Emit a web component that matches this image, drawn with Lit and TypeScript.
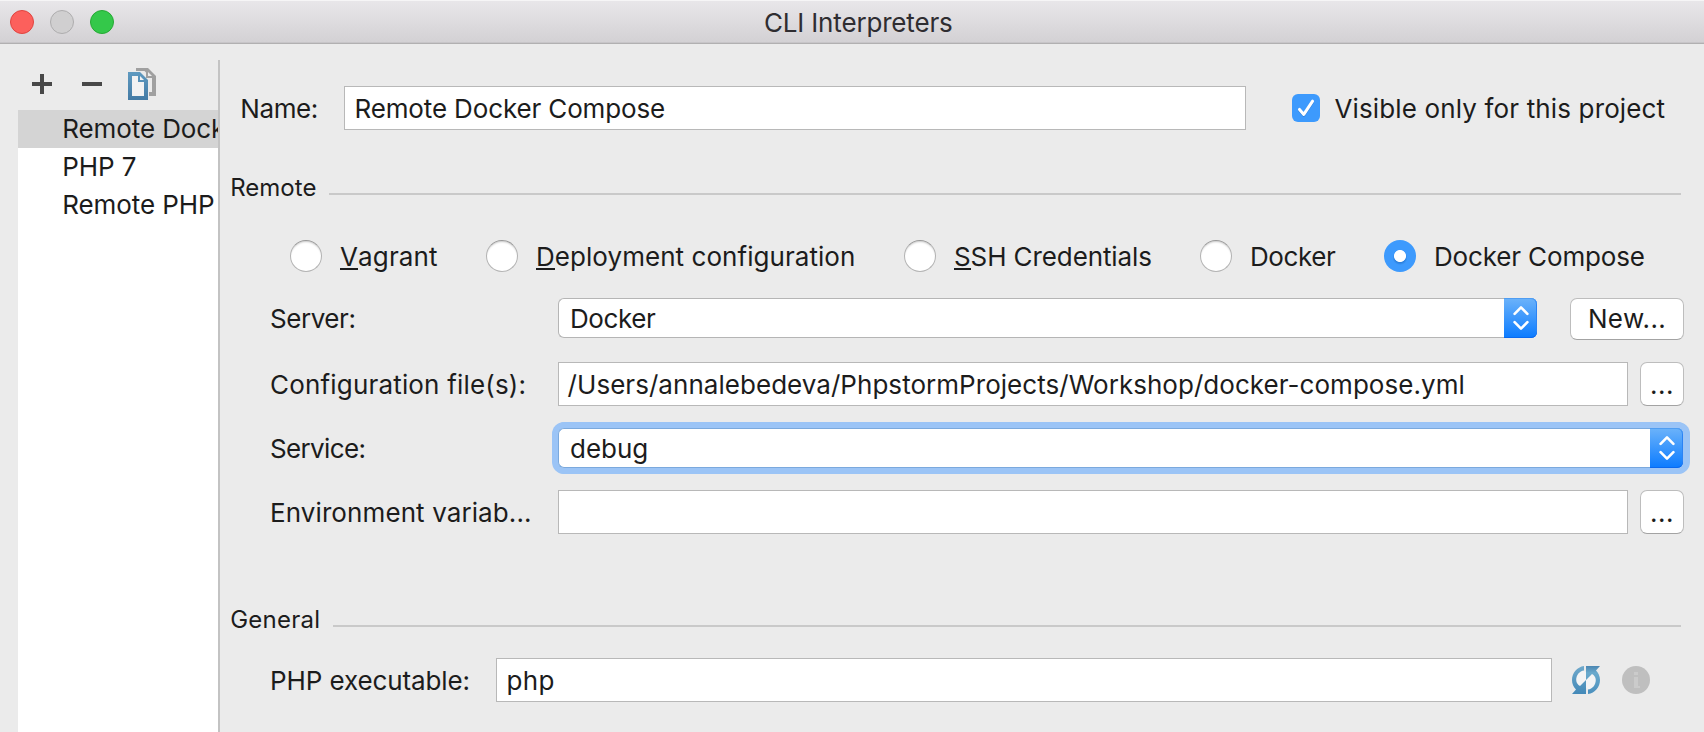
import { LitElement, html, css, nothing } from "lit";

const INTERPRETERS = ["Remote Dock", "PHP 7", "Remote PHP"];

const REMOTE_TYPES = [
  { key: "vagrant", mnemonic: "V", rest: "agrant" },
  { key: "deployment", mnemonic: "D", rest: "eployment configuration" },
  { key: "ssh", mnemonic: "S", rest: "SH Credentials" },
  { key: "docker", mnemonic: "", rest: "Docker" },
  { key: "compose", mnemonic: "", rest: "Docker Compose" },
];

class MacSelect extends LitElement {
  static properties = { value: {}, focused: { type: Boolean, reflect: true } };
  declare value: string;
  static styles = css`
    :host { display: flex; box-sizing: border-box; height: 40px; border-radius: 7px; }
    :host([focused]) { box-shadow: 0 0 0 6px #9bc4f6, 1px 0 0 6px #9bc4f6; border-radius: 6px; }
    .value {
      flex: 1; box-sizing: border-box; padding-left: 11px; line-height: 39px;
      background: #fff; border: 1px solid #b5b5b5; border-right: 0;
      border-radius: 6px 0 0 6px; white-space: nowrap;
    }
    :host([focused]) .value { border-color: #7ba9dd; letter-spacing: 0; }
    .docker { letter-spacing: -0.41px; }
    .knob {
      display: flex; align-items: center; justify-content: center;
      width: 33px; height: 40px; box-sizing: border-box; border-radius: 0 6px 6px 0;
      background: linear-gradient(#6cb3fa, #0b7bff);
      box-shadow: inset 0 1px 0 #4f9df2, inset 0 -1px 0 #0a69ef, inset -1px 0 0 #2b83f4;
    }
  `;
  render() {
    return html`<div class="value ${this.value === "Docker" ? "docker" : ""}">${this.value}</div>
      <div class="knob">
        <svg width="16" height="26" viewBox="0 0 16 26" fill="none" stroke="#fff"
          stroke-width="2.6" stroke-linecap="round" stroke-linejoin="round">
          <path d="M1.600 8.800 8 2.400l6.400 6.400M1.600 17.200 8 23.600l6.400-6.400"></path>
        </svg>
      </div>`;
  }
}
customElements.define("mac-select", MacSelect);

class AppRoot extends LitElement {
  static styles = css`
    :host {
      display: flex; flex-direction: column; width: 1704px; height: 732px; overflow: hidden;
      background: #ebebeb; color: #1c1c1c; font: 26px/31px Inter, "Liberation Sans", sans-serif;
      white-space: nowrap;
    }
    .titlebar {
      display: flex; align-items: center; flex: none; height: 44px; box-sizing: border-box;
      padding: 0 10px; gap: 16px; color: #2f2d31;
      background: linear-gradient(#e9e7ea, #d2d0d3);
      box-shadow: inset 0 1px 0 #f6f5f6, inset 0 -1px 0 #b1b0b1, inset 0 -2px 0 #c7c5c8;
    }
    .light { width: 24px; height: 24px; box-sizing: border-box; border-radius: 50%; border: 1px solid; }
    .red { background: #fc605c; border-color: #e0443f; }
    .grey { background: #d0cfd0; border-color: #aeadae; }
    .green { background: #34c84a; border-color: #26a934; }
    .title { margin-left: 634px; padding-top: 1px; letter-spacing: -0.17px; }
    .content { display: flex; flex: 1; min-height: 0; padding-top: 16px; }

    .sidebar { display: flex; flex-direction: column; width: 200px; margin-left: 18px; border-right: 2px solid #c3c3c3; }
    .tools { display: flex; gap: 26px; height: 50px; box-sizing: border-box; padding: 8px 0 0 14px; }
    .tools svg { display: block; }
    .sign { margin-top: 6px; }
    .tools .minus { margin: 6px 0 0 4px; }
    .list { flex: 1; overflow: hidden; background: #fff; }
    .item { height: 38px; line-height: 37px; padding-left: 44.300px; letter-spacing: -0.1px; overflow: hidden; }
    .selected { background: #d4d4d4; }

    .form { flex: 1; display: flex; flex-direction: column; }
    .field {
      box-sizing: border-box; height: 44px; line-height: 43px; padding-left: 9.500px;
      border: 1px solid #b8b8b8; background: #fff;
    }
    .namerow { display: flex; align-items: center; height: 44px; margin: 26px 0 0 20.300px; }
    .namerow .label { width: 103.700px; padding-top: 1px; letter-spacing: -0.4px; }
    .namerow .field { width: 902px; letter-spacing: -0.14px; }
    .checkbox { display: block; margin: 0 14.500px 0 46px; }
    .visible { padding-top: 1px; letter-spacing: 0.14px; }

    .section { display: flex; align-items: center; height: 30px; margin-left: 10.200px; font-size: 24px; line-height: 30px; letter-spacing: 0.02px; }
    .heading { padding-top: 2px; }
    .remote { margin-top: 42px; }
    .general { margin-top: 70px; letter-spacing: 0.25px; }
    .rule { flex: 1; height: 2px; margin: 14px 23px 0 12.500px; background: #c9c9c9; }

    .radios { display: grid; grid-template-columns: 196px 418px 296px 184px 1fr; height: 32px; margin: 38px 0 0 70px; }
    .radio { display: flex; align-items: center; gap: 18px; }
    .dot {
      width: 32px; height: 32px; box-sizing: border-box; border-radius: 50%; background: #fff;
      border: 1px solid #b4b4b4; border-top-color: #989898; box-shadow: inset 0 2px 2px -1px #c9c9c9;
    }
    .on {
      background: radial-gradient(circle at 50% 50%, #fff 5.600px, transparent 6.400px),
        radial-gradient(circle at 50% 55%, #2b7fdb 5px, #3d9afd 7.500px);
      background-origin: border-box; border-color: transparent; box-shadow: none;
    }
    .caption { padding-top: 1px; }
    .mn { display: inline-block; height: 29px; line-height: 31px; box-sizing: border-box; border-bottom: 2px solid #1c1c1c; vertical-align: top; }
    .vagrant { letter-spacing: 0.13px; }
    .deployment { letter-spacing: 0.05px; }
    .ssh { letter-spacing: -0.1px; }
    .docker { letter-spacing: -0.41px; }
    .compose { letter-spacing: -0.15px; }

    .row { display: flex; height: 44px; line-height: 45px; margin-left: 50px; }
    .row .label { width: 288px; }
    .server { margin-top: 24px; }
    .config { margin-top: 22px; }
    .service { margin-top: 20px; }
    .env { margin-top: 20px; }
    .exec { margin-top: 24px; }
    .server .label { letter-spacing: -0.45px; }
    .config .label { letter-spacing: 0.18px; }
    .service .label { letter-spacing: -0.65px; }
    .env .label { letter-spacing: 0.1px; }
    .exec .label { width: 226px; letter-spacing: -0.1px; }
    .row .field { width: 1070px; }
    .config .field { padding-left: 8.600px; letter-spacing: 0.04px; }
    .exec .field { width: 1056px; letter-spacing: 0.4px; }
    .server mac-select { width: 979px; margin-top: 2px; }
    .service mac-select { width: 1125px; margin-top: 2px; }
    .button {
      box-sizing: border-box; border: 1px solid #bdbdbd; border-bottom-color: #a3a3a3; border-radius: 7px;
      background: #fff; text-align: center;
    }
    .new { width: 114px; height: 42px; margin: 2px 0 0 33px; line-height: 39px; letter-spacing: 0.34px; }
    .browse { width: 44px; height: 44px; margin-left: 12px; line-height: 43px; letter-spacing: 0.5px; }
    .refresh { display: block; margin: 8px 0 0 20px; }
    .info { display: block; margin: 8px 0 0 22px; }
  `;

  private checkbox() {
    return html`<svg class="checkbox" width="28" height="28" viewBox="0 0 28 28">
      <rect width="28" height="28" rx="6" fill="#3d9afd"></rect>
      <path d="M7.500 16.200l4.300 5L20.600 8" fill="none" stroke="#2a7dd8" stroke-width="3" stroke-linecap="round" stroke-linejoin="round"></path>
      <path d="M7.500 15.400l4.300 5L20.600 7.200" fill="none" stroke="#fff" stroke-width="3" stroke-linecap="round" stroke-linejoin="round"></path>
    </svg>`;
  }

  private copyIcon() {
    return html`<svg width="28" height="32" viewBox="0 0 28 32">
      <defs><linearGradient id="page" x1="0" y1="0" x2="0" y2="1">
        <stop offset="0" stop-color="#5f9ac0"></stop><stop offset="1" stop-color="#447ba5"></stop>
      </linearGradient></defs>
      <path d="M8 0h12l8 8v20h-7v-4h3V10h-6V4.500L16.500 3H8z" fill="#a0a0a0"></path>
      <path d="M20 4l4 4h-4z" fill="#ededed"></path>
      <path d="M0 4h12l8 8v20H0z" fill="url(#page)"></path>
      <path d="M4 8h6v6h6v14H4z" fill="#f2f2f2"></path>
      <path d="M12 8l4 4h-4z" fill="#f2f2f2"></path>
    </svg>`;
  }

  private refreshIcon() {
    const half = "M12 0C5 1 0 7 0 14c0 3.800 1.500 7 4 9.500L0 28h14V14l-6 6c-2.200-1.200-3.800-3.200-3.800-6C4.200 9 7.500 5 12 4.500z";
    return html`<svg class="refresh" width="28" height="28" viewBox="0 0 28 28">
      <defs><linearGradient id="up" x1="0" y1="0" x2="0" y2="1">
        <stop offset="0" stop-color="#6fa9cb"></stop><stop offset="1" stop-color="#4389b8"></stop>
      </linearGradient><linearGradient id="down" x1="0" y1="1" x2="0" y2="0">
        <stop offset="0" stop-color="#4b86b2"></stop><stop offset=".25" stop-color="#6aaacd"></stop><stop offset="1" stop-color="#4a8fbd"></stop>
      </linearGradient></defs>
      <path d="M4.200 14C4.200 9 7.500 5 12 4.500L16 8 20 8c2.200 1.200 3.800 3.200 3.800 6 0 5-3.300 9-7.800 9.500L12 20H8c-2.200-1.200-3.800-3.200-3.800-6z" fill="#f3f4f5"></path>
      <path d=${half} fill="url(#up)"></path>
      <path d=${half} fill="url(#down)" transform="rotate(180 14 14)"></path>
    </svg>`;
  }

  private infoIcon() {
    return html`<svg class="info" width="28" height="28" viewBox="0 0 28 28">
      <circle cx="14" cy="14" r="14" fill="#bfbfbf"></circle>
      <path d="M12 6h4v3h-4zM12 11h4v9h2v2h-6z" fill="#cbcbcb"></path>
    </svg>`;
  }

  render() {
    return html`
      <div class="titlebar">
        <div class="light red"></div><div class="light grey"></div><div class="light green"></div>
        <div class="title">CLI Interpreters</div>
      </div>
      <div class="content">
        <div class="sidebar">
          <div class="tools">
            <svg class="sign" width="20" height="20"><path d="M8 0h4v8h8v4h-8v8H8v-8H0V8h8z" fill="#484848"></path></svg>
            <svg class="minus" width="20" height="20"><path d="M0 8h20v4H0z" fill="#484848"></path></svg>
            ${this.copyIcon()}
          </div>
          <div class="list">
            ${INTERPRETERS.map((name, i) => html`<div class="item ${i === 0 ? "selected" : ""}">${name}</div>`)}
          </div>
        </div>
        <div class="form">
          <div class="namerow">
            <div class="label">Name:</div>
            <div class="field">Remote Docker Compose</div>
            ${this.checkbox()}
            <div class="visible">Visible only for this project</div>
          </div>
          <div class="section remote"><div class="heading">Remote</div><div class="rule"></div></div>
          <div class="radios">
            ${REMOTE_TYPES.map((r) => html`<div class="radio">
              <div class="dot ${r.key === "compose" ? "on" : ""}"></div>
              <div class="caption ${r.key}">${r.mnemonic ? html`<span class="mn">${r.mnemonic}</span>` : nothing}${r.rest}</div>
            </div>`)}
          </div>
          <div class="row server">
            <div class="label">Server:</div>
            <mac-select .value=${"Docker"}></mac-select>
            <div class="button new">New...</div>
          </div>
          <div class="row config">
            <div class="label">Configuration file(s):</div>
            <div class="field">/Users/annalebedeva/PhpstormProjects/Workshop/docker-compose.yml</div>
            <div class="button browse">...</div>
          </div>
          <div class="row service">
            <div class="label">Service:</div>
            <mac-select .value=${"debug"} focused></mac-select>
          </div>
          <div class="row env">
            <div class="label">Environment variab...</div>
            <div class="field"></div>
            <div class="button browse">...</div>
          </div>
          <div class="section general"><div class="heading">General</div><div class="rule"></div></div>
          <div class="row exec">
            <div class="label">PHP executable:</div>
            <div class="field">php</div>
            ${this.refreshIcon()}${this.infoIcon()}
          </div>
        </div>
      </div>`;
  }
}
customElements.define("app-root", AppRoot);
